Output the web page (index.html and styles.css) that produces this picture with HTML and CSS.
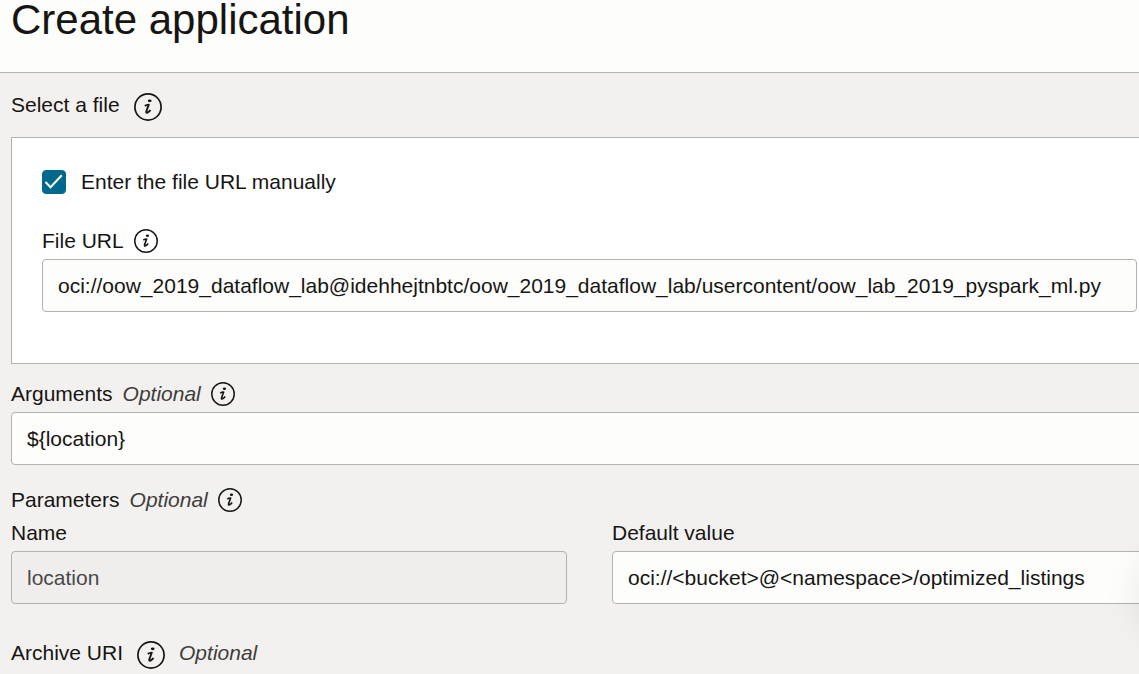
FILE: index.html
```
<!DOCTYPE html>
<html lang="en">
<head>
    <meta charset="UTF-8">
    <meta name="viewport" content="width=device-width, initial-scale=1.0">
    <title>Create application</title>
    <link rel="stylesheet" href="styles.css">
</head>
<body>
    <svg class="sprite" aria-hidden="true">
        <symbol id="info" viewBox="0 0 28 28">
            <circle cx="14" cy="14" r="13.1" fill="none" stroke="currentColor" stroke-width="1.7"/>
            <ellipse cx="15.7" cy="7.8" rx="1.9" ry="1.4" fill="currentColor"/>
            <path d="M10.8 12.8 Q12.8 11.7 14.8 11.6 L12.4 18 Q11.8 20.2 13.4 19.6 Q15.2 18.8 16.5 17" fill="none" stroke="currentColor" stroke-width="1.9" stroke-linejoin="round"/>
        </symbol>
    </svg>

    <header class="header">
        <h1>Create application</h1>
    </header>

    <main class="content">
        <form class="form">
            <div class="label-row large">
                <span>Select a file</span>
                <button type="button" class="info" aria-label="About selecting a file"><svg><use href="#info"/></svg></button>
            </div>

            <div class="panel">
                <div class="check-row">
                    <span class="check">
                        <input type="checkbox" id="manual-url" checked>
                        <svg viewBox="0 0 24 24" aria-hidden="true"><path d="M3.5 12 L8.5 17.2 L19.8 5.2" fill="none" stroke="#fff" stroke-width="2"/></svg>
                    </span>
                    <label for="manual-url">Enter the file URL manually</label>
                </div>
                <div class="label-row">
                    <label for="file-url">File URL</label>
                    <button type="button" class="info" aria-label="About the file URL"><svg><use href="#info"/></svg></button>
                </div>
                <input type="text" class="field" id="file-url" value="oci://oow_2019_dataflow_lab@idehhejtnbtc/oow_2019_dataflow_lab/usercontent/oow_lab_2019_pyspark_ml.py">
            </div>

            <div class="label-row">
                <label for="arguments">Arguments</label>
                <em>Optional</em>
                <button type="button" class="info" aria-label="About arguments"><svg><use href="#info"/></svg></button>
            </div>
            <input type="text" class="field" id="arguments" value="${location}">

            <div class="label-row parameters">
                <span>Parameters</span>
                <em>Optional</em>
                <button type="button" class="info" aria-label="About parameters"><svg><use href="#info"/></svg></button>
            </div>
            <div class="columns">
                <div>
                    <div class="label-row"><label for="param-name">Name</label></div>
                    <input type="text" class="field" id="param-name" value="location" disabled>
                </div>
                <div>
                    <div class="label-row"><label for="param-value">Default value</label></div>
                    <input type="text" class="field" id="param-value" value="oci://&lt;bucket&gt;@&lt;namespace&gt;/optimized_listings">
                </div>
            </div>

            <div class="label-row large">
                <span>Archive URI</span>
                <button type="button" class="info" aria-label="About the archive URI"><svg><use href="#info"/></svg></button>
                <em>Optional</em>
            </div>
        </form>
    </main>

    <div class="help-shadow"></div>
</body>
</html>
```

FILE: styles.css
```
* {
    box-sizing: border-box;
}
body {
    margin: 0;
    min-height: 100vh;
    background-color: #f3f1f0;
    color: #161513;
    font-family: "Liberation Sans", Arial, sans-serif;
    font-size: 21px;
    line-height: 24px;
    position: relative;
    overflow: hidden;
}
.sprite {
    display: none;
}
.header {
    padding: 0 11px 32px;
    background-color: #fdfdfc;
    border-bottom: 1px solid #b4b2af;
}
h1 {
    margin: 0;
    font-size: 42px;
    font-weight: normal;
    line-height: 40px;
}
.content {
    padding: 20px 0 0 11px;
}
/* the form runs on past the right edge of the window */
.form {
    margin-right: -29px;
}
.label-row {
    display: flex;
    align-items: center;
    gap: 10px;
    min-height: 24px;
    margin-bottom: 6px;
}
.label-row.large {
    align-items: flex-start;
    gap: 14px;
    margin-bottom: 16px;
}
.label-row em {
    color: #3f3d3b;
}
.info {
    width: 24px;
    height: 24px;
    padding: 0;
    border: none;
    background: none;
    color: inherit;
    cursor: pointer;
}
.info svg {
    display: block;
    width: 100%;
    height: 100%;
}
.large .info {
    width: 28px;
    height: 28px;
}
.panel {
    margin-bottom: 18px;
    padding: 30px 30px 51px;
    background-color: #fff;
    border: 1px solid #b4b2af;
}
.check-row {
    display: flex;
    align-items: center;
    gap: 15px;
    height: 28px;
    margin-bottom: 33px;
}
.check {
    position: relative;
    width: 24px;
    height: 24px;
}
.check input {
    appearance: none;
    display: block;
    width: 24px;
    height: 24px;
    margin: 0;
    border: 1px solid #00688c;
    border-radius: 4px;
    background-color: #fff;
}
.check input:checked {
    background-color: #00688c;
}
.check svg {
    position: absolute;
    inset: 0;
    pointer-events: none;
}
.check input:not(:checked) + svg {
    display: none;
}
.field {
    display: block;
    width: 100%;
    height: 53px;
    padding: 0 15px;
    border: 1px solid #b4b2af;
    border-radius: 4px;
    background-color: #fdfdfc;
    color: #161513;
    font: inherit;
}
.field:disabled {
    background-color: #efeeed;
    color: #4a4846;
}
.parameters {
    margin: 23px 0 9px;
}
.columns {
    display: grid;
    grid-template-columns: 1fr 1fr;
    gap: 45px;
    margin-bottom: 37px;
}
/* floating help button, just off the right edge */
.help-shadow {
    position: absolute;
    right: -70px;
    top: 555px;
    width: 68px;
    height: 80px;
    border-radius: 34px;
    box-shadow: 0 0 40px rgba(0, 0, 0, 0.1);
}
```
